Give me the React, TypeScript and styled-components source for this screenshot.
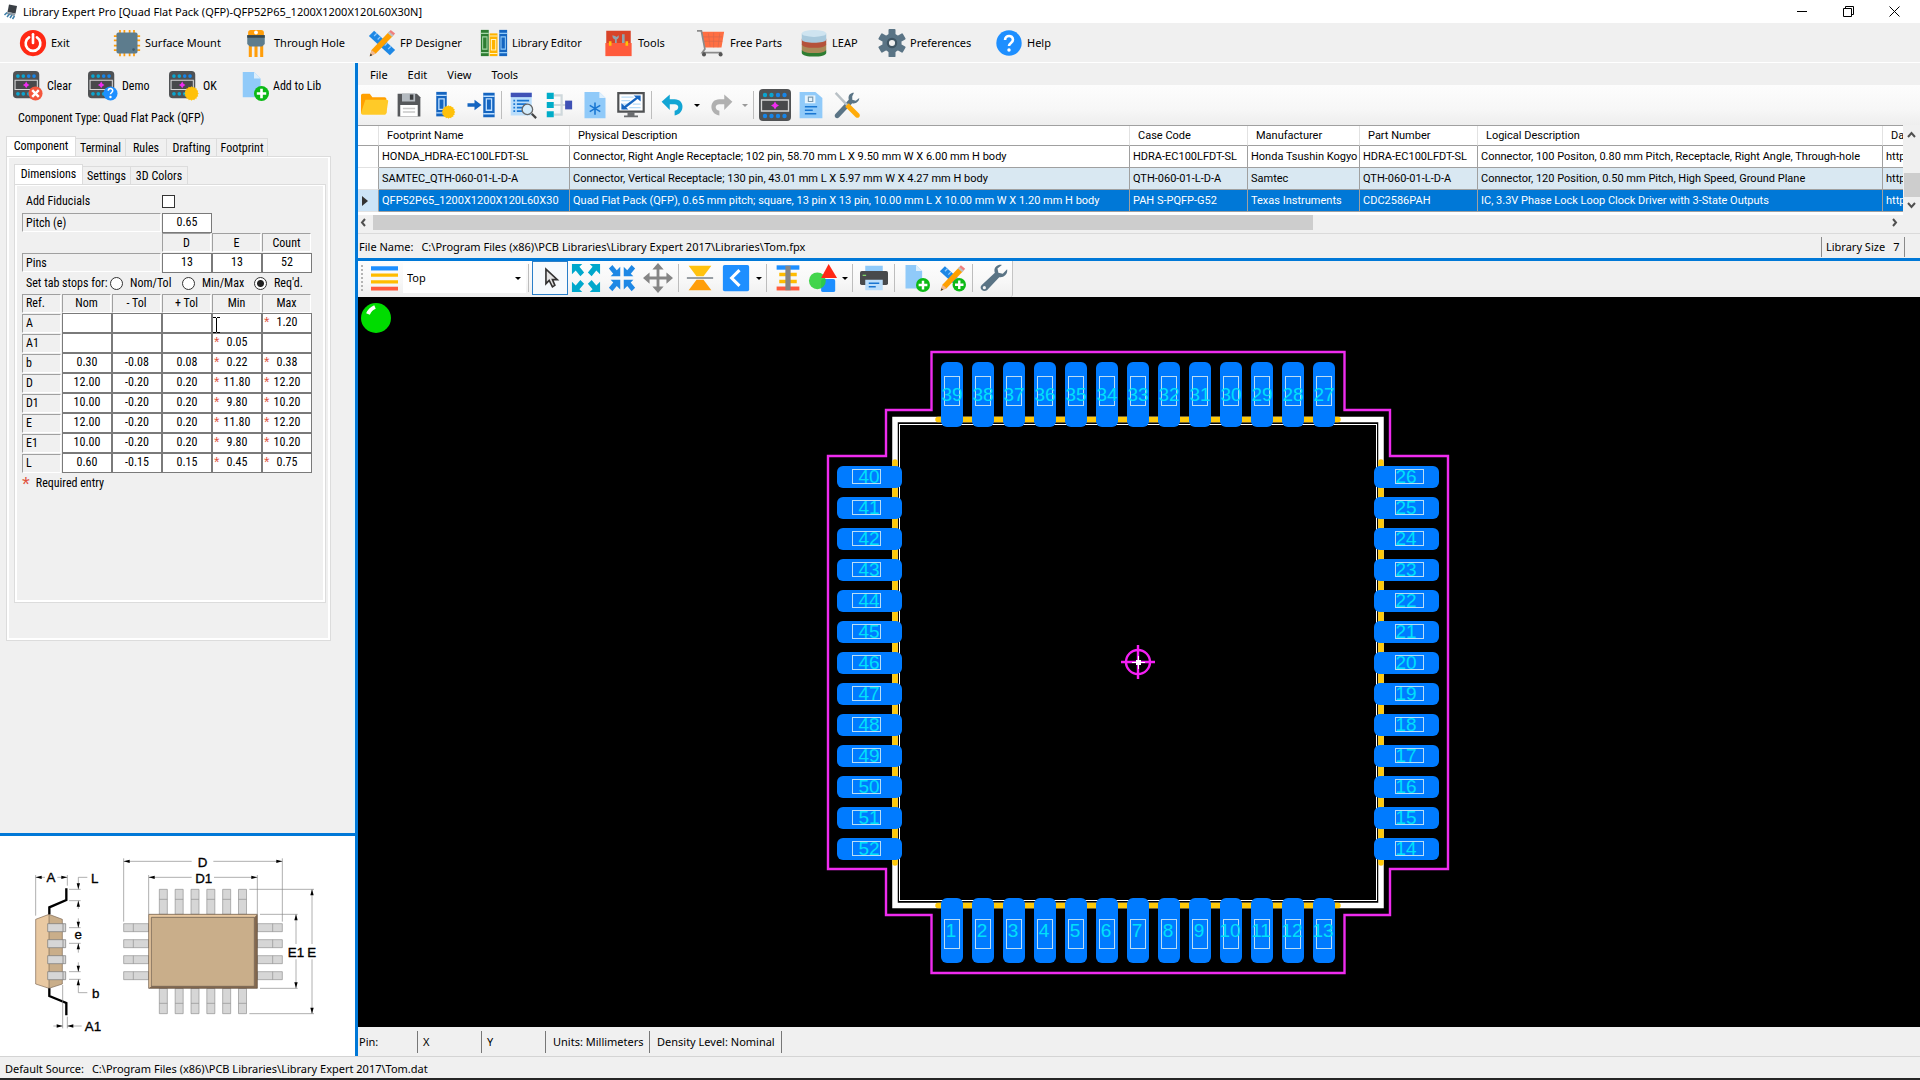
import React, { ReactNode, useState } from 'react';
import styled, { createGlobalStyle, css } from 'styled-components';

const ui = '"Noto Sans", "Open Sans", sans-serif';
const classic = '"Roboto Condensed", Roboto, "Liberation Sans", sans-serif';
const grid = 'Roboto, "Liberation Sans", sans-serif';
const accent = '#0078d7';
const face = '#f0f0f0';

const GlobalStyle = createGlobalStyle`
  *, *::before, *::after { box-sizing: border-box; }
  body { margin: 0; background: ${face}; color: #000; font: 11px/16px ${ui}; }
  button, input, select { font: inherit; color: inherit; margin: 0; }
  button { border: 0; padding: 0; background: none; }
  svg { display: block; flex: none; }
`;

/* ---------- frame ---------- */

const Window = styled.div`
  display: flex;
  flex-direction: column;
  height: 100vh;
  min-height: 700px;
  overflow: hidden;
`;
const TitleBar = styled.header`
  display: flex;
  align-items: center;
  flex: none;
  height: 23px;
  padding: 0 3px;
  background: #fff;
`;
const Title = styled.h1`
  flex: 1;
  margin: 0 0 0 4px;
  font-size: 11px;
  line-height: 16px;
  font-weight: 400;
`;
const WindowButton = styled.button`
  display: grid;
  place-items: center;
  width: 46px;
  height: 20px;
`;
const MainToolbar = styled.nav`
  display: flex;
  align-items: center;
  flex: none;
  height: 40px;
  padding-left: 19px;
  border-bottom: 1px solid #fff;
`;
const Command = styled.button<{ $w: number }>`
  display: flex;
  align-items: center;
  gap: 4px;
  width: ${p => p.$w}px;
  text-align: left;
  white-space: nowrap;
`;
const Body = styled.div`
  display: flex;
  flex: 1;
  min-height: 0;
`;
const AppStatus = styled.footer`
  display: flex;
  align-items: center;
  gap: 8px;
  flex: none;
  height: 24px;
  padding: 2px 5px 0;
  border-top: 1px solid #d4d4d4;
  border-bottom: 2px solid #262626;
`;

/* ---------- side panel ---------- */

const Side = styled.aside`
  display: flex;
  flex-direction: column;
  flex: none;
  width: 358px;
  border-right: 3px solid ${accent};
  box-shadow: inset -2px 0 #e2f5fc;
  font-family: ${classic};
  font-size: 12px;
`;
const SideToolbar = styled.div`
  display: flex;
  align-items: center;
  height: 46px;
  padding-left: 13px;
`;
const TypeLine = styled.p`
  margin: 0;
  padding: 1px 0 9px 18px;
  line-height: 17px;
`;
const TabGroup = styled.section`
  margin-right: 24px;
  margin-left: 6px;
`;
const InnerTabGroup = styled.section`
  margin: 7px 4px 0 6px;
`;
const TabStrip = styled.div`
  display: flex;
  align-items: flex-end;
`;
const Tab = styled.button<{ $w: number; $on?: boolean }>`
  width: ${p => p.$w}px;
  height: 18px;
  border: 1px solid #dcdcdc;
  border-bottom: 0;
  border-left-width: 0;
  ${p => p.$on && css`
    height: 20px;
    border-left-width: 1px;
    background: #fff;
    padding-bottom: 2px;
  `}
`;
const Pane = styled.div<{ $h: number }>`
  height: ${p => p.$h}px;
  border: 1px solid #dcdcdc;
  box-shadow: inset 2px 1px #fff, inset -2px -2px #fff;
  padding-left: 1px;
`;
const Form = styled.div`
  padding: 6px 0 0 6px;
`;
const Fiducials = styled.div`
  display: flex;
  align-items: center;
  height: 20px;
  margin-bottom: 2px;
  padding-left: 4px;
`;
const FiducialLabel = styled.label`
  width: 136px;
`;
const Check = styled.input`
  appearance: none;
  width: 13px;
  height: 13px;
  border: 1px solid #333;
  background: #fff;
`;
const PinGrid = styled.div`
  display: grid;
  grid-template-columns: 140px repeat(3, 50px);
  grid-auto-rows: 20px;
`;
const LabelCell = styled.label`
  margin: 0 1px 1px 0;
  padding-left: 3px;
  line-height: 18px;
  border: 1px solid #fff;
  border-top-color: #a0a0a0;
  border-left-color: #a0a0a0;
`;
const HeadCell = styled(LabelCell)`
  padding: 0;
  text-align: center;
`;
const Box = styled.input`
  display: block;
  width: 50px;
  height: 20px;
  padding: 0 0 2px;
  border: 1px solid #7a7a7a;
  background: #fff;
  text-align: center;
  line-height: 16px;
`;
const Stops = styled.fieldset`
  display: flex;
  align-items: center;
  height: 20px;
  margin: 0;
  padding: 0 0 0 4px;
  border: 0;
`;
const StopsTitle = styled.span`
  width: 84px;
`;
const RadioLabel = styled.label<{ $w: number }>`
  display: flex;
  align-items: center;
  gap: 7px;
  width: ${p => p.$w}px;
  white-space: nowrap;
`;
const Radio = styled.input`
  appearance: none;
  flex: none;
  width: 13px;
  height: 13px;
  border: 1px solid #333;
  border-radius: 50%;
  background: #fff;
  &:checked { background: radial-gradient(circle, #222 3px, #fff 4px); }
`;
const DimTable = styled.table`
  border-collapse: collapse;
  table-layout: fixed;
  width: 290px;
  td, th { padding: 0; height: 20px; font-weight: 400; }
`;
const DimHead = styled.div<{ $left?: boolean }>`
  height: 19px;
  margin-right: 1px;
  padding-left: ${p => (p.$left ? 3 : 0)}px;
  border: 1px solid #fff;
  border-top-color: #a0a0a0;
  border-left-color: #a0a0a0;
  text-align: ${p => (p.$left ? 'left' : 'center')};
  line-height: 17px;
`;
const DimCell = styled.div`
  position: relative;
`;
const Star = styled.span`
  position: absolute;
  top: 2px;
  left: 2px;
  color: #e0503c;
  font: 14px/14px "Liberation Sans", sans-serif;
`;
const Caret = styled.svg`
  position: absolute;
  top: 4px;
  left: 1px;
`;
const Note = styled.p`
  display: flex;
  align-items: center;
  gap: 6px;
  margin: 2px 0 0;
  line-height: 17px;
`;
const NoteStar = styled.span`
  color: #e0503c;
  font: 20px/12px "Liberation Sans", sans-serif;
`;
const Spacer = styled.div`
  flex: 1;
`;
const Preview = styled.figure`
  flex: none;
  margin: 0;
  border-top: 3px solid ${accent};
  background: #fff;
`;

/* ---------- library area ---------- */

const Work = styled.main`
  display: flex;
  flex-direction: column;
  flex: 1;
  min-width: 0;
`;
const MenuBar = styled.nav`
  display: flex;
  align-items: center;
  height: 22px;
  flex: none;
  padding: 0 2px;
`;
const MenuItem = styled.button`
  padding: 2px 10px 0;
  height: 20px;
`;
const ToolStrip = styled.div`
  display: flex;
  align-items: center;
  flex: none;
  height: 40px;
  background: linear-gradient(#fdfdfd, #f7f7f7 60%, #eeeeee);
`;
const Tool = styled.button<{ $w?: number; $on?: boolean }>`
  display: grid;
  place-items: center;
  flex: none;
  width: ${p => p.$w ?? 36}px;
  height: 34px;
  ${p => p.$on && css`
    border: 1px solid #2a7fc9;
    background: #f6fafd;
  `}
`;
const DropCaret = styled.button<{ $off?: boolean; $narrow?: boolean }>`
  display: grid;
  place-items: center;
  width: ${p => (p.$narrow ? 10 : 12)}px;
  height: 30px;
  &::after {
    content: '';
    border: 3px solid transparent;
    border-top-color: ${p => (p.$off ? '#9a9a9a' : '#000')};
    border-bottom: 0;
  }
`;
const Divider = styled.span`
  flex: none;
  width: 1px;
  height: 28px;
  margin: 0 3px 0 2px;
  background: #bdbdbd;
`;
const TableArea = styled.div`
  display: flex;
  flex: none;
  height: 90px;
`;
const TableClip = styled.div`
  flex: 1;
  min-width: 0;
  overflow: hidden;
  background: #fff;
`;
const PartTable = styled.table`
  table-layout: fixed;
  width: 1580px;
  border-collapse: separate;
  border-spacing: 0;
  border-top: 1px solid #a0a0a0;
  font: 11px/16px ${grid};
`;
const PartHead = styled.th`
  height: 20px;
  padding: 1px 0 0 8px;
  border-right: 1px solid #e2e2e2;
  border-bottom: 1px solid #a0a0a0;
  font-weight: 400;
  text-align: left;
  white-space: nowrap;
`;
const PartRow = styled.tr<{ $tone: 'plain' | 'alt' | 'on' }>`
  background: ${p => ({ plain: '#fff', alt: '#d9e8f2', on: accent })[p.$tone]};
  color: ${p => (p.$tone === 'on' ? '#fff' : '#000')};
`;
const PartCell = styled.td`
  height: 22px;
  padding: 1px 0 0 3px;
  border-right: 1px solid #a0a0a0;
  border-bottom: 1px solid #a0a0a0;
  white-space: nowrap;
`;
const Marker = styled(PartCell)<{ $on?: boolean }>`
  padding-left: 4px;
  background: ${p => (p.$on ? '#cce4f7' : '#fff')};
  border-bottom-color: #e2e2e2;
`;
const VScroll = styled.div`
  display: flex;
  flex-direction: column;
  align-items: center;
  width: 17px;
  padding: 4px 0;
`;
const VThumb = styled.div`
  width: 16px;
  height: 24px;
  margin: 33px 0 auto;
  background: #cdcdcd;
`;
const HScroll = styled.div`
  display: flex;
  align-items: center;
  flex: none;
  height: 15px;
  padding: 0 20px 0 0;
`;
const HTrack = styled.div`
  flex: 1;
  height: 15px;
  margin-left: 4px;
`;
const HThumb = styled.div`
  width: 62%;
  height: 15px;
  background: #cdcdcd;
`;
const FileLine = styled.div`
  display: flex;
  align-items: center;
  flex: none;
  height: 28px;
  margin-top: 3px;
  padding: 2px 0 0 1px;
  border-top: 1px solid #dadada;
  border-bottom: 3px solid ${accent};
`;
const FilePath = styled.span`
  flex: 1;
  margin-left: 8px;
`;
const LibrarySize = styled.span`
  display: flex;
  gap: 8px;
  height: 20px;
  align-items: center;
  width: 84px;
  margin-right: 15px;
  padding-left: 4px;
  border: solid #8a8a8a;
  border-width: 0 1px;
  white-space: nowrap;
`;

/* ---------- footprint view ---------- */

const ViewStrip = styled.div`
  display: flex;
  flex: none;
  height: 36px;
`;
const ViewTools = styled(ToolStrip)`
  height: 36px;
  padding-bottom: 2px;
  border-right: 1px solid #c4c4c4;
  border-radius: 0 0 3px 0;
`;
const Grip = styled.span`
  width: 2px;
  height: 26px;
  margin: 0 7px 0 3px;
  background: repeating-linear-gradient(#b4b4b4 0 2px, transparent 2px 4px);
`;
const LayerBox = styled.label`
  display: flex;
  align-items: center;
  gap: 4px;
`;
const LayerField = styled.span`
  display: flex;
  align-items: center;
  width: 123px;
  padding-right: 2px;
  background: #fff;
`;
const LayerSelect = styled.select`
  appearance: none;
  flex: 1;
  height: 26px;
  padding: 0 4px;
  border: 0;
  background: #fff;
`;
const Canvas = styled.div`
  position: relative;
  flex: 1;
  min-height: 0;
  background: #000;
`;
const Led = styled.svg`
  position: absolute;
  top: 5px;
  left: 2px;
`;
const ViewStatus = styled.div`
  display: flex;
  align-items: center;
  flex: none;
  height: 29px;
`;
const StatusCell = styled.span<{ $w: number; $pad?: number }>`
  width: ${p => p.$w}px;
  height: 22px;
  padding-left: ${p => p.$pad ?? 5}px;
  border-right: 1px solid #777;
  line-height: 22px;
  white-space: nowrap;
`;

/* ---------- icons ---------- */

const Icon = ({ w = 28, h = 28, children }: { w?: number; h?: number; children: ReactNode }) => (
  <svg width={w} height={h} viewBox="0 0 32 32" aria-hidden="true">{children}</svg>
);

const Power = () => (
  <Icon>
    <circle cx="16" cy="16" r="15" fill="#ff2814" />
    <path d="M11.5 9.500a8.400 8.400 0 1 0 9 0" fill="none" stroke="#fff" strokeWidth="3" strokeLinecap="round" />
    <path d="M16 6v10" stroke="#fff" strokeWidth="3" strokeLinecap="round" />
  </Icon>
);
const Smd = () => (
  <Icon>
    <path d="M8 1v30M13 1v30M19 1v30M24 1v30M1 8h30M1 13h30M1 19h30M1 24h30" stroke="#ff9d0a" strokeWidth="2" />
    <rect x="4" y="4" width="24" height="24" rx="2" fill="#5d7c8d" />
    <circle cx="23.500" cy="23.500" r="1.500" fill="#40596a" />
  </Icon>
);
const ThroughHole = () => (
  <Icon>
    <path d="M7 4q0-3 3-3h12q3 0 3 3v6H7z" fill="#ff9d0a" />
    <circle cx="16" cy="4" r="2.200" fill="#fff" />
    <path d="M9.500 18v14M16 18v14M22.500 18v14" stroke="#ff9d0a" strokeWidth="3.500" />
    <path d="M6 7h20v10l-3 3H9l-3-3z" fill="#5d7c8d" />
    <path d="M6 7h20v3H6z" fill="#37474f" />
  </Icon>
);
const RulerPencil = ({ plus }: { plus?: boolean }) => (
  <Icon w={plus ? 27 : 28}>
    <path d="M1 8 7 2l24 22-6 6z" fill="#1e88e5" />
    <path d="m10 5-3 3M14 9l-3 3M22 16l-3 3M26 20l-3 3" stroke="#8ec9ff" strokeWidth="1.500" />
    <path d="m2 31 2-7L24 3l5 4.500L9 28z" fill="#ffa000" />
    <path d="m2 31 2-7 5 4z" fill="#f0b890" />
    <path d="m2 31 1-3 2 2z" fill="#333" />
    <path d="m24 3 2-2 5 4-2 2.500z" fill="#ef7f7f" />
    <path d="m22.500 4.600 1.500-1.600 5 4.500-1.500 1.600z" fill="#b9c4ca" />
    {plus && <PlusBadge />}
  </Icon>
);
const Book = ({ x, c, d }: { x: number; c: string; d: string }) => (
  <g>
    <path d={`M${x} 1h9v30h-9z`} fill={c} />
    <path d={`M${x + 2} 9h5v14h-5zM${x} 5h9M${x} 27h9`} fill="none" stroke={d} strokeWidth="1.200" />
  </g>
);
const Books = () => (
  <Icon>
    <Book x={1} c="#2e7d32" d="#a5d6a7" />
    <path d="M11 5h9v26h-9z" fill="#ffb300" />
    <path d="M13 12h5v12h-5zM11 8h9M11 28h9" fill="none" stroke="#fff3c0" strokeWidth="1.200" />
    <Book x={22} c="#1565c0" d="#90caf9" />
  </Icon>
);
const Toolbox = () => (
  <Icon w={31} h={28}>
    <path d="M2 2h28v16H2z" fill="#d84328" />
    <path d="M9 7c0 3 1 4 3 5v5h2v-5c2-1 3-3 2-5l-2 2-2-1zM20 6h3v11h-3z" fill="#90a4ae" />
    <path d="M1 16h30v15H1z" fill="#ff5a3c" />
    <path d="M5 14h3v5H5zM24 14h3v5h-3z" fill="#ffc107" />
  </Icon>
);
const Cart = () => (
  <Icon w={30} h={28}>
    <path d="M5 3h26l-3 18H9z" fill="#ff6f43" />
    <path d="M13 5 15 20M19 4v17M26 5l-2 16M7 9h22M8 14h21" stroke="#d9694c" strokeWidth="0.800" />
    <path d="M0 2h5l4 21-3 4h22" fill="none" stroke="#8b8b8b" strokeWidth="2" />
    <circle cx="8" cy="29" r="2.300" fill="#555" />
    <circle cx="27" cy="29" r="2.300" fill="#555" />
  </Icon>
);
const Database = () => (
  <Icon>
    <path d="M2 24v3c0 6 28 6 28 0v-3z" fill="#2e7d32" />
    <path d="M2 17v6c0 6 28 6 28 0v-6z" fill="#a98a58" />
    <path d="M2 11v6c0 6 28 6 28 0v-6z" fill="#b5523a" />
    <path d="M2 5v7c0 5 28 5 28 0V5z" fill="#a9c9dc" />
    <ellipse cx="16" cy="5" rx="14" ry="4" fill="#cfe4f0" />
  </Icon>
);
const Gear = () => (
  <Icon>
    {[0, 60, 120].map(a => (
      <rect key={a} x="12" y="0" width="8" height="32" rx="1" fill="#5a7485" transform={`rotate(${a} 16 16)`} />
    ))}
    <circle cx="16" cy="16" r="11" fill="#5a7485" />
    <circle cx="16" cy="16" r="6" fill="#3f5563" />
    <circle cx="16" cy="16" r="3.500" fill="#f0f0f0" />
  </Icon>
);
const Question = () => (
  <path d="M11.500 12.500c0-6 9-6 9-.3 0 3.800-4.500 3.600-4.500 7.300" fill="none" stroke="#fff" strokeWidth="3" />
);
const Help = () => (
  <Icon>
    <circle cx="16" cy="16" r="14.500" fill="#1e8fff" />
    <Question />
    <circle cx="16" cy="24" r="2" fill="#fff" />
  </Icon>
);
const PlusBadge = () => (
  <g>
    <circle cx="24" cy="24" r="8" fill="#0cba16" />
    <path d="M24 19v10M19 24h10" stroke="#fff" strokeWidth="2.800" />
  </g>
);
const Burst = ({ x = 24, y = 24 }: { x?: number; y?: number }) => (
  <g fill="#ffc10a" transform={`translate(${x} ${y})`}>
    {[0, 22, 45, 67].map(a => <rect key={a} x="-5.500" y="-5.500" width="11" height="11" transform={`rotate(${a})`} />)}
  </g>
);
const Chip = ({ size = 30, badge, bottom = '#0aa5d0' }: { size?: number; badge?: 'x' | '?' | '*'; bottom?: string }) => (
  <Icon w={size} h={size}>
    <rect x="0" y="0" width={badge ? 28 : 32} height={badge ? 29 : 32} rx="4" fill="#505254" />
    <g transform={badge ? 'scale(.88 .9)' : undefined}>
      {[6, 12.500, 19, 25.500].map(x => (
        <g key={x}>
          <circle cx={x} cy="6" r="2.200" fill={x < 15 ? '#0aa5d0' : '#1685e8'} />
          <circle cx={x} cy="27" r="2.200" fill={bottom} />
        </g>
      ))}
      <path d="M2.500 11h27v11h-27z" fill="#48494b" stroke="#d5d5d5" strokeWidth="1.300" />
      <path d="m16 12.500 1.500 2.500 2.500 1.500-2.500 1.500-1.500 2.500-1.500-2.500-2.500-1.500 2.500-1.500z" fill="#f02cf0" />
    </g>
    {badge === 'x' && <g><circle cx="24" cy="24" r="7.500" fill="#f4563c" /><path d="m20.500 20.500 7 7m0-7-7 7" stroke="#fff" strokeWidth="2.600" /></g>}
    {badge === '?' && <g><circle cx="24" cy="24" r="7.500" fill="#1e8fff" /><g transform="translate(15.500 14.500) scale(.53)"><Question /><circle cx="16" cy="25" r="2.400" fill="#fff" /></g></g>}
    {badge === '*' && <Burst />}
  </Icon>
);
const PagePlus = ({ size = 30 }: { size?: number }) => (
  <Icon w={size} h={size}>
    <path d="M4 1h12l7 7v20H4z" fill="#90caf9" />
    <path d="M16 1v7h7z" fill="#dceefb" />
    <PlusBadge />
  </Icon>
);
const Folder = () => (
  <Icon>
    <path d="M0 5c0-1 1-2 2-2h8l3 4h14c1 0 2 1 2 2v16H0z" fill="#ffa000" />
    <path d="M5 10h24c1.500 0 2.500 1 2 2l-2 13c0 1-1 2-2 2H2c-1 0-2-1-2-2z" fill="#ffca28" />
  </Icon>
);
const Floppy = () => (
  <Icon>
    <path d="M3 3h22l4 4v22H3z" fill="#56585b" />
    <path d="M8 3h15v9H8z" fill="#b4bac0" />
    <path d="M17 4h4v6h-4z" fill="#3c3e40" />
    <path d="M6 16h20v13H6z" fill="#fff" />
    <path d="M9 20h14M9 24h14" stroke="#c8c8c8" strokeWidth="1.500" />
  </Icon>
);
const BookNew = () => (
  <Icon>
    <path d="M6 1h12v28H6z" fill="#1565c0" />
    <path d="M9 9h6v12H9zM6 5h12M6 25h12" fill="none" stroke="#bfe0ff" strokeWidth="1.500" />
    <Burst x={20} y={24} />
  </Icon>
);
const BookInto = () => (
  <Icon w={29} h={28}>
    <path d="M18 2h13v28H18z" fill="#1565c0" />
    <path d="M21.500 9h6v13h-6zM18 6h13M18 26h13" fill="none" stroke="#bfe0ff" strokeWidth="1.500" />
    <path d="M0 14h8v-4l8 6-8 6v-4H0z" fill="#1565c0" />
  </Icon>
);
const ListSearch = () => (
  <Icon>
    <path d="M2 2h24v26H2z" fill="#bbdefb" />
    <path d="M2 2h24v5H2z" fill="#3f51b5" />
    <path d="M5 11h2M9 11h14M5 15h2M9 15h11M5 19h2M9 19h7M5 23h2M9 23h7" stroke="#1976d2" strokeWidth="1.800" />
    <circle cx="21" cy="21" r="6" fill="#d4ecfb" stroke="#666" strokeWidth="1.500" />
    <path d="m26 26 5 5" stroke="#444" strokeWidth="2.500" />
  </Icon>
);
const Tree = () => (
  <Icon>
    <path d="M10 5h9v22h-9M10 16h14" fill="none" stroke="#cfd8dc" strokeWidth="2.500" />
    <path d="M2 2h8v7H2zM2 12.500h8v7H2zM2 23h8v7H2z" fill="#00acc8" />
    <path d="M23 11h8v10h-8z" fill="#3f51b5" />
  </Icon>
);
const PageStar = () => (
  <Icon>
    <path d="M4 1h17l7 7v23H4z" fill="#90caf9" />
    <path d="M21 1v7h7z" fill="#e1f1fd" />
    <path d="M16 13v14M10 16.500l12 7M22 16.500l-12 7" stroke="#1976d2" strokeWidth="1.800" />
  </Icon>
);
const Monitor = () => (
  <Icon w={32} h={28}>
    <path d="M1.500 2.500h29v21h-29z" fill="#fff" stroke="#505254" strokeWidth="2.500" />
    <path d="M5 7h14M5 11h10M5 15h8M14 19h13M18 15h9" stroke="#b8dcf7" strokeWidth="1.500" />
    <path d="m7 20 17-13" stroke="#1565c0" strokeWidth="2.800" />
    <path d="M19 5h8v7zM5 14v7h8z" fill="#1565c0" />
    <path d="M12 24h8v4h4v2H8v-2h4z" fill="#6b6d70" />
  </Icon>
);
const Undo = ({ color, flip }: { color: string; flip?: boolean }) => (
  <Icon w={26} h={26}>
    <g transform={flip ? 'translate(32 0) scale(-1 1)' : undefined}>
      <path d="M12 3v6h6c13 0 13 18 0 20v-6c6-1 6-8 0-8h-6v7L2 12z" fill={color} />
    </g>
  </Icon>
);
const PageSheet = () => (
  <Icon>
    <path d="M3 1h18l8 7v23H3z" fill="#90caf9" />
    <path d="M9 5h12v9H9z" fill="#e7f4fd" />
    <path d="M13 7h5v5h-5z" fill="none" stroke="#7a98ad" strokeWidth="1.300" />
    <path d="M9 18h14M9 22h9M9 26h13" stroke="#1976d2" strokeWidth="1.600" />
  </Icon>
);
const Wrench = ({ size = 28 }: { size?: number }) => (
  <Icon w={size} h={size}>
    <path d="M25 1c-6-1-10 4-8 9L2 24c-4 4 2 9 6 6l14-15c5 1 10-3 9-9l-5 5-5-1-1-5z" fill="#5a7485" />
    <circle cx="5" cy="27" r="1.800" fill="#f3f3f3" />
  </Icon>
);
const CrossTools = () => (
  <Icon>
    <path d="M24 2c-5 0-7 4-6 8L3 26c-3 3 1 7 4 4L22 14c4 1 8-2 8-6l-4 3-4-1v-4z" fill="#5a7485" />
    <path d="m2 3 2-2 14 15-2 2z" fill="#b9c1c6" />
    <path d="m14 18 4-4 12 12c2 3-1 6-4 4z" fill="#ffab0a" />
  </Icon>
);
const Layers = () => (
  <Icon w={29} h={27}>
    <path d="M0 4h32" stroke="#1e8fff" strokeWidth="5" />
    <path d="M0 12h32M0 20h32" stroke="#ffbc00" strokeWidth="4" />
    <path d="M0 28h32" stroke="#ff5a3c" strokeWidth="4.500" />
  </Icon>
);
const Pointer = () => (
  <Icon w={26} h={26}>
    <path d="M11 5v18l4-4 4 8 3-2-3-7h6z" fill="#e4e4e4" stroke="#333" strokeWidth="2" />
  </Icon>
);
const arrow = 'M0 0h11L8 3l5 6-4 4-5-6-4 4z';
const Expand = () => (
  <Icon w={30} h={30}>
    {[[1, 1, 1, 1], [31, 1, -1, 1], [1, 31, 1, -1], [31, 31, -1, -1]].map(([x, y, a, b]) => (
      <path key={`${x}-${y}`} d={arrow} fill="#00a8cc" transform={`translate(${x} ${y}) scale(${a} ${b})`} />
    ))}
  </Icon>
);
const Contract = () => (
  <Icon>
    {[[14, 14, -1, -1], [18, 14, 1, -1], [14, 18, -1, 1], [18, 18, 1, 1]].map(([x, y, a, b]) => (
      <path key={`${x}-${y}`} d={arrow} fill="#1e88e5" transform={`translate(${x} ${y}) scale(${a} ${b})`} />
    ))}
  </Icon>
);
const Move = () => (
  <Icon w={30} h={30}>
    <path d="M16 0l6 7h-4.500v7.500H25V10l7 6-7 6v-4.500h-7.500V25H22l-6 7-6-7h4.500v-7.500H7V22l-7-6 7-6v4.500h7.500V7H10z" fill="#858585" />
  </Icon>
);
const FlipV = () => (
  <Icon>
    <path d="M3 2h26l-9 12h-8z" fill="#ffc20e" />
    <path d="M3 30h26l-9-12h-8z" fill="#ff9d0a" />
    <path d="M1 16h30" stroke="#8a9298" strokeWidth="2" />
  </Icon>
);
const Back = () => (
  <Icon>
    <rect x="1" y="1" width="30" height="30" rx="2" fill="#1e8fff" />
    <path d="m20 7-9 9 9 9" fill="none" stroke="#fff" strokeWidth="3.500" />
  </Icon>
);
const Stack = () => (
  <Icon>
    <path d="M3 4h26" stroke="#1e8fff" strokeWidth="5" />
    <path d="M6 12h20M6 20h20" stroke="#ffbc00" strokeWidth="4" />
    <path d="M3 28h26" stroke="#ff5a3c" strokeWidth="4.500" />
    <path d="M16 2v28" stroke="#858585" strokeWidth="6" />
  </Icon>
);
const Shapes = () => (
  <Icon w={30} h={30}>
    <rect x="14" y="17" width="15" height="14" rx="2" fill="#1e8fff" />
    <circle cx="10" cy="19" r="9" fill="#2fd03a" fillOpacity=".9" />
    <path d="m22 1 9 15H14z" fill="#ff2814" />
  </Icon>
);
const Printer = () => (
  <Icon>
    <path d="M6 2h20v9H6z" fill="#90caf9" />
    <rect x="0" y="8" width="32" height="16" rx="2" fill="#484a4c" />
    <path d="M3 13h4" stroke="#7fd46b" strokeWidth="1.500" />
    <path d="M6 18h20v12H6z" fill="#bbdefb" />
    <path d="M10 22h12M10 26h8" stroke="#1976d2" strokeWidth="1.800" />
  </Icon>
);
const AppMark = () => (
  <Icon w={16} h={16}>
    <path d="m12 1 16 3-3 15-16-3z" fill="#3a3f45" />
    <path d="m9 16 16 3-2 5-17-4z" fill="#8f9aa3" />
    <path d="m3 22 5-5M8 26l5-6M14 28l4-6M19 30l4-6" stroke="#3d7ea8" strokeWidth="3" />
  </Icon>
);

/* ---------- drawings ---------- */

const span = (n: number) => Array.from({ length: n }, (_, i) => i);

type PadProps = { x: number; y: number; n: number; flat?: boolean; dx: number; dy: number; box: number };
const Pad = ({ x, y, n, flat, dx, dy, box }: PadProps) => (
  <g>
    <rect x={x} y={y} width={flat ? 65 : 22} height={flat ? 22 : 65} rx="6" fill="#007bff" />
    <rect
      x={(flat ? x + box : x + 3) + 0.5} y={(flat ? y + 3 : y + box) + 0.5}
      width={flat ? 28 : 15} height={flat ? 14 : 29} fill="none" stroke="#b9dcf5"
    />
    <text x={x + dx} y={y + dy} fill="#00e0fa" textAnchor="middle">{n}</text>
  </g>
);

const Footprint = () => (
  <svg width="100%" height="100%" viewBox="358 297 1562 730" role="img" aria-label="Quad flat pack footprint">
    <path
      d="M931.500 352H1344.500V410H1390V456H1448V869H1390V915H1344.500V973H931.500V915H886V869H828V456H886V410H931.500Z"
      fill="none" stroke="#ef2cef" strokeWidth="2.400"
    />
    <rect x="895" y="419.500" width="486" height="486" fill="none" stroke="#fff" strokeWidth="5.500" />
    <g stroke="#ffc90a" strokeWidth="5.500" strokeLinecap="round">
      <path d="M938 419.500H1338M938 905.500H1338M895 462V863M1381 462V863" />
    </g>
    <rect x="899.500" y="424.500" width="477" height="476" fill="none" stroke="#fff" />
    <g fontFamily="Liberation Sans, sans-serif" fontSize="19">
      {span(13).map(i => (
        <g key={i}>
          <Pad x={941 + 31 * i} y={362} n={39 - i} dx={11} dy={39} box={14} />
          <Pad x={941 + 31 * i} y={898} n={i + 1} dx={10} dy={39} box={21} />
          <Pad flat x={837} y={466 + 31 * i} n={40 + i} dx={32} dy={17} box={15} />
          <Pad flat x={1374} y={466 + 31 * i} n={26 - i} dx={32} dy={17} box={21} />
        </g>
      ))}
    </g>
    <g fill="none" stroke="#f51ff5" strokeWidth="2.400">
      <circle cx="1138" cy="662" r="12" />
      <path d="M1121 662h34M1138 645v34" />
    </g>
    <path d="M1132 662.500h13M1138.500 656v13" stroke="#fff" />
    <rect x="1136" y="660" width="5" height="5" fill="#fff" />
  </svg>
);

const tips = {
  l: 'l18 -5v10z', r: 'l-18 -5v10z', u: 'l-5 18h10z', d: 'l-5 -18h10z',
};
const Tip = ({ x, y, to }: { x: number; y: number; to: keyof typeof tips }) => (
  <path d={`M${x} ${y}${tips[to]}`} fill="#000" />
);
const PackageDrawing = () => (
  <svg width="355" height="220" viewBox="0 33 1065 660" role="img" aria-label="Package dimensions">
    <g fill="#d6d6d6" stroke="#8f8f8f" strokeWidth="2">
      {span(6).map(i => (
        <path key={i} d={`M${478 + 47.5 * i} 193h24v75h-24zm0 30h24M${478 + 47.5 * i} 490h24v76h-24zm0 45h24`} />
      ))}
      {span(4).map(i => (
        <path key={i} d={`M371 ${296 + 48 * i}h75v24h-75zm29 0v24M772 ${296 + 48 * i}h75v24h-75zm46 0v24`} />
      ))}
    </g>
    <path d="M446 268h326l-9 9H454v207l-8 6z" fill="#e9c9a2" />
    <path d="M772 268v222H446l8-6h309V277z" fill="#84694f" />
    <path d="M454 277h309v207H454z" fill="#c9ae8a" />
    <path d="M446 268h326v222H446zM454 277h309v207H454z" fill="none" stroke="#5c4a38" strokeWidth="2" />

    <path d="M107 283 147 268V490L107 477z" fill="#e9c9a2" />
    <path d="M147 268 187 283V477L147 490z" fill="#c9ae8a" />
    <path d="M107 283 147 268 187 283V477L147 490 107 477zM147 268V490" fill="none" stroke="#7b6753" strokeWidth="2" />
    {span(4).map(i => (
      <path key={i} d={`M143 ${296 + 48 * i}h54v24h-54zm46 0v24`} fill="#d6d6d6" stroke="#777" strokeWidth="2" />
    ))}
    <path d="M199 190V225L148 247V268M148 490V513L199 534V571" fill="none" stroke="#000" strokeWidth="7" />

    <g fill="none" stroke="#888" strokeWidth="2">
      <path d="M371 100V290M847 100V290M371 109H575M640 109H847M446 150V268M772 150V268M446 157H575M642 157H772" />
      <path d="M748 193H942M748 566H942M936 193V357M936 403V566M780 268H893M780 490H893M888 268V357M888 403V490" />
      <path d="M107 150V272M202 150V182M107 157H135M172 157H202M262 157H235V193M207 193H242M207 227H242M235 227V252" />
      <path d="M207 308H242M207 355H242M235 280V308M235 355V383M207 440H242M207 463H242M235 412V440M235 463V503H262" />
      <path d="M188 480V610M202 575V610M160 603H188M202 603H245" />
    </g>
    <Tip x={371} y={109} to="l" /><Tip x={847} y={109} to="r" />
    <Tip x={446} y={157} to="l" /><Tip x={772} y={157} to="r" />
    <Tip x={936} y={193} to="u" /><Tip x={936} y={566} to="d" />
    <Tip x={888} y={268} to="u" /><Tip x={888} y={490} to="d" />
    <Tip x={107} y={157} to="l" /><Tip x={202} y={157} to="r" />
    <Tip x={235} y={193} to="d" /><Tip x={235} y={227} to="u" />
    <Tip x={235} y={308} to="d" /><Tip x={235} y={355} to="u" />
    <Tip x={235} y={440} to="d" /><Tip x={235} y={463} to="u" />
    <Tip x={188} y={603} to="r" /><Tip x={202} y={603} to="l" />
    <g fontFamily="Liberation Sans, sans-serif" fontSize="40" textAnchor="middle" stroke="#000" strokeWidth="1">
      <text x="608" y="125">D</text>
      <text x="611" y="173">D1</text>
      <text x="888" y="395">E1</text>
      <text x="935" y="395">E</text>
      <text x="153" y="172">A</text>
      <text x="284" y="173">L</text>
      <text x="235" y="343">e</text>
      <text x="287" y="519">b</text>
      <text x="279" y="618">A1</text>
    </g>
  </svg>
);

const Chevron = ({ d }: { d: string }) => (
  <svg width="11" height="11" viewBox="0 0 11 11" aria-hidden="true">
    <path d={d} fill="none" stroke="#505050" strokeWidth="2" />
  </svg>
);

/* ---------- data ---------- */

const commands: [string, number, ReactNode][] = [
  ['Exit', 94, <Power />],
  ['Surface Mount', 129, <Smd />],
  ['Through Hole', 126, <ThroughHole />],
  ['FP Designer', 112, <RulerPencil />],
  ['Library Editor', 123, <Books />],
  ['Tools', 93, <Toolbox />],
  ['Free Parts', 104, <Cart />],
  ['LEAP', 78, <Database />],
  ['Preferences', 117, <Gear />],
  ['Help', 70, <Help />],
];

const parts: { tone: 'plain' | 'alt' | 'on'; cells: string[] }[] = [
  { tone: 'plain', cells: ['HONDA_HDRA-EC100LFDT-SL', 'Connector, Right Angle Receptacle; 102 pin, 58.70 mm L X 9.50 mm W X 6.00 mm H body', 'HDRA-EC100LFDT-SL', 'Honda Tsushin Kogyo', 'HDRA-EC100LFDT-SL', 'Connector, 100 Positon, 0.80 mm Pitch, Receptacle, Right Angle, Through-hole', 'http'] },
  { tone: 'alt', cells: ['SAMTEC_QTH-060-01-L-D-A', 'Connector, Vertical Receptacle; 130 pin, 43.01 mm L X 5.97 mm W X 4.27 mm H body', 'QTH-060-01-L-D-A', 'Samtec', 'QTH-060-01-L-D-A', 'Connector, 120 Position, 0.50 mm Pitch, High Speed, Ground Plane', 'http'] },
  { tone: 'on', cells: ['QFP52P65_1200X1200X120L60X30', 'Quad Flat Pack (QFP), 0.65 mm pitch; square, 13 pin X 13 pin, 10.00 mm L X 10.00 mm W X 1.20 mm H body', 'PAH S-PQFP-G52', 'Texas Instruments', 'CDC2586PAH', 'IC, 3.3V Phase Lock Loop Clock Driver with 3-State Outputs', 'http'] },
];
const columns = ['Footprint Name', 'Physical Description', 'Case Code', 'Manufacturer', 'Part Number', 'Logical Description', 'Da'];
const widths = [21, 191, 560, 118, 112, 118, 405, 55];

const dims: [string, string[]][] = [
  ['A', ['', '', '', '', '1.20*']],
  ['A1', ['', '', '', '0.05*', '']],
  ['b', ['0.30', '-0.08', '0.08', '0.22*', '0.38*']],
  ['D', ['12.00', '-0.20', '0.20', '11.80*', '12.20*']],
  ['D1', ['10.00', '-0.20', '0.20', '9.80*', '10.20*']],
  ['E', ['12.00', '-0.20', '0.20', '11.80*', '12.20*']],
  ['E1', ['10.00', '-0.20', '0.20', '9.80*', '10.20*']],
  ['L', ['0.60', '-0.15', '0.15', '0.45*', '0.75*']],
];
const dimHeads = ['Nom', '- Tol', '+ Tol', 'Min', 'Max'];

/* ---------- sections ---------- */

const Dimensions = () => {
  const [stop, setStop] = useState("Req'd.");
  return (
    <Form>
      <Fiducials>
        <FiducialLabel htmlFor="fid">Add Fiducials</FiducialLabel>
        <Check id="fid" type="checkbox" />
      </Fiducials>
      <PinGrid>
        <LabelCell htmlFor="pitch">Pitch (e)</LabelCell>
        <Box id="pitch" defaultValue="0.65" />
        <span /><span />
        <span />
        <HeadCell htmlFor="pinD">D</HeadCell>
        <HeadCell htmlFor="pinE">E</HeadCell>
        <HeadCell htmlFor="pinCount">Count</HeadCell>
        <LabelCell as="span">Pins</LabelCell>
        <Box id="pinD" defaultValue="13" />
        <Box id="pinE" defaultValue="13" />
        <Box id="pinCount" defaultValue="52" />
      </PinGrid>
      <Stops>
        <StopsTitle>Set tab stops for:</StopsTitle>
        {([['Nom/Tol', 72], ['Min/Max', 72], ["Req'd.", 60]] as [string, number][]).map(([name, w]) => (
          <RadioLabel key={name} $w={w}>
            <Radio type="radio" name="stops" checked={stop === name} onChange={() => setStop(name)} />
            {name}
          </RadioLabel>
        ))}
      </Stops>
      <DimTable>
        <colgroup>
          <col width="40" />
          {dimHeads.map(h => <col key={h} width="50" />)}
        </colgroup>
        <thead>
          <tr>
            <th><DimHead $left>Ref.</DimHead></th>
            {dimHeads.map(h => <th key={h}><DimHead>{h}</DimHead></th>)}
          </tr>
        </thead>
        <tbody>
          {dims.map(([ref, values]) => (
            <tr key={ref}>
              <th><DimHead $left>{ref}</DimHead></th>
              {values.map((v, i) => (
                <td key={i}>
                  <DimCell>
                    <Box aria-label={`${ref} ${dimHeads[i]}`} defaultValue={v.replace('*', '')} />
                    {v.endsWith('*') && <Star>*</Star>}
                    {ref === 'A' && i === 3 && (
                      <Caret width="7" height="16" viewBox="0 0 7 16" aria-hidden="true">
                        <path d="M0 .5h3M4 .5h3M3.500 1v14M0 15.500h3M4 15.500h3" stroke="#000" />
                      </Caret>
                    )}
                  </DimCell>
                </td>
              ))}
            </tr>
          ))}
        </tbody>
      </DimTable>
      <Note><NoteStar>*</NoteStar>Required entry</Note>
    </Form>
  );
};

const SidePanel = () => (
  <Side>
    <SideToolbar>
      <Command $w={75}><Chip badge="x" />Clear</Command>
      <Command $w={81}><Chip badge="?" />Demo</Command>
      <Command $w={70}><Chip badge="*" />OK</Command>
      <Command $w={90}><PagePlus />Add to Lib</Command>
    </SideToolbar>
    <TypeLine>Component Type: Quad Flat Pack (QFP)</TypeLine>
    <TabGroup>
      <TabStrip role="tablist">
        <Tab role="tab" aria-selected $on $w={70}>Component</Tab>
        <Tab role="tab" $w={50}>Terminal</Tab>
        <Tab role="tab" $w={41}>Rules</Tab>
        <Tab role="tab" $w={50}>Drafting</Tab>
        <Tab role="tab" $w={51}>Footprint</Tab>
      </TabStrip>
      <Pane $h={485}>
        <InnerTabGroup>
          <TabStrip role="tablist">
            <Tab role="tab" aria-selected $on $w={69}>Dimensions</Tab>
            <Tab role="tab" $w={48}>Settings</Tab>
            <Tab role="tab" $w={57}>3D Colors</Tab>
          </TabStrip>
          <Pane $h={419}><Dimensions /></Pane>
        </InnerTabGroup>
      </Pane>
    </TabGroup>
    <Spacer />
    <Preview><PackageDrawing /></Preview>
  </Side>
);

const PartList = () => (
  <>
    <TableArea>
      <TableClip>
        <PartTable>
          <colgroup>{widths.map((w, i) => <col key={i} width={w} />)}</colgroup>
          <thead>
            <tr>
              <PartHead aria-label="Current row" />
              {columns.map(c => <PartHead key={c}>{c}</PartHead>)}
            </tr>
          </thead>
          <tbody>
            {parts.map(p => (
              <PartRow key={p.cells[0]} $tone={p.tone}>
                <Marker $on={p.tone === 'on'}>
                  {p.tone === 'on' && <svg width="6" height="10" viewBox="0 0 6 10"><path d="M0 0 6 5 0 10z" fill="#333" /></svg>}
                </Marker>
                {p.cells.map((c, i) => <PartCell key={i}>{c}</PartCell>)}
              </PartRow>
            ))}
          </tbody>
        </PartTable>
      </TableClip>
      <VScroll>
        <Chevron d="m2 8 3.500-4L9 8" />
        <VThumb />
        <Chevron d="m2 3 3.500 4L9 3" />
      </VScroll>
    </TableArea>
    <HScroll>
      <Chevron d="M7 2 4 5.500 7 9" />
      <HTrack><HThumb /></HTrack>
      <Chevron d="m4 2 3 3.500L4 9" />
    </HScroll>
    <FileLine>
      File Name:
      <FilePath>C:\Program Files (x86)\PCB Libraries\Library Expert 2017\Libraries\Tom.fpx</FilePath>
      <LibrarySize><span>Library Size</span><span>7</span></LibrarySize>
    </FileLine>
  </>
);

export default function App() {
  return (
    <Window>
      <GlobalStyle />
      <TitleBar>
        <AppMark />
        <Title>Library Expert Pro [Quad Flat Pack (QFP)-QFP52P65_1200X1200X120L60X30N]</Title>
        <WindowButton aria-label="Minimize"><svg width="11" height="11"><path d="M0 5.500h10" stroke="#000" /></svg></WindowButton>
        <WindowButton aria-label="Restore"><svg width="11" height="11"><path d="M.5 2.500h8v8h-8zM2.500 2V.5h8v8H9" fill="none" stroke="#000" /></svg></WindowButton>
        <WindowButton aria-label="Close"><svg width="11" height="11"><path d="m.5.5 10 10m0-10-10 10" stroke="#000" /></svg></WindowButton>
      </TitleBar>
      <MainToolbar>
        {commands.map(([name, w, icon]) => <Command key={name} $w={w}>{icon}{name}</Command>)}
      </MainToolbar>
      <Body>
        <SidePanel />
        <Work>
          <MenuBar>
            {['File', 'Edit', 'View', 'Tools'].map(m => <MenuItem key={m}>{m}</MenuItem>)}
          </MenuBar>
          <ToolStrip>
            <Tool $w={33} aria-label="Open"><Folder /></Tool>
            <Tool aria-label="Save"><Floppy /></Tool>
            <Tool aria-label="New library"><BookNew /></Tool>
            <Tool aria-label="Import"><BookInto /></Tool>
            <Divider />
            <Tool aria-label="Find"><ListSearch /></Tool>
            <Tool aria-label="Tree"><Tree /></Tool>
            <Tool aria-label="Wildcard"><PageStar /></Tool>
            <Tool aria-label="Full screen"><Monitor /></Tool>
            <Divider />
            <Tool aria-label="Undo"><Undo color="#12a5d4" /></Tool>
            <DropCaret aria-label="Undo list" />
            <Tool aria-label="Redo"><Undo color="#b0b0b0" flip /></Tool>
            <DropCaret aria-label="Redo list" $off />
            <Divider />
            <Tool aria-label="Footprint"><Chip size={32} bottom="#1685e8" /></Tool>
            <Tool aria-label="Data sheet"><PageSheet /></Tool>
            <Tool aria-label="Options"><CrossTools /></Tool>
          </ToolStrip>
          <PartList />
          <ViewStrip>
            <ViewTools>
              <Grip />
              <LayerBox>
                <Layers />
                <LayerField>
                  <LayerSelect aria-label="Layer" defaultValue="Top"><option>Top</option><option>Bottom</option></LayerSelect>
                  <DropCaret as="span" />
                </LayerField>
              </LayerBox>
              <Divider />
              <Tool $on aria-label="Select"><Pointer /></Tool>
              <Tool aria-label="Zoom to fit"><Expand /></Tool>
              <Tool aria-label="Zoom in"><Contract /></Tool>
              <Tool aria-label="Pan"><Move /></Tool>
              <Divider />
              <Tool aria-label="Flip"><FlipV /></Tool>
              <Tool aria-label="Rotate"><Back /></Tool>
              <DropCaret $narrow aria-label="Rotate list" />
              <Divider />
              <Tool aria-label="Layer stack"><Stack /></Tool>
              <Tool $w={34} aria-label="Shapes"><Shapes /></Tool>
              <DropCaret $narrow aria-label="Shape list" />
              <Divider />
              <Tool aria-label="Print"><Printer /></Tool>
              <Divider />
              <Tool aria-label="Add page"><PagePlus size={28} /></Tool>
              <Tool aria-label="Add design"><RulerPencil plus /></Tool>
              <Divider />
              <Tool aria-label="Settings"><Wrench /></Tool>
            </ViewTools>
          </ViewStrip>
          <Canvas>
            <Footprint />
            <Led width="32" height="32" viewBox="0 0 32 32" aria-label="Ready">
              <circle cx="16" cy="16" r="15" fill="#00dc00" />
              <path d="M8 12q2-5 7-7" fill="none" stroke="#fff" strokeWidth="4" />
            </Led>
          </Canvas>
          <ViewStatus>
            <StatusCell $w={60} $pad={1}>Pin:</StatusCell>
            <StatusCell $w={64}>X</StatusCell>
            <StatusCell $w={64}>Y</StatusCell>
            <StatusCell $w={104} $pad={7}>Units: Millimeters</StatusCell>
            <StatusCell $w={132} $pad={7}>Density Level: Nominal</StatusCell>
          </ViewStatus>
        </Work>
      </Body>
      <AppStatus>
        <span>Default Source:</span>
        <span>C:\Program Files (x86)\PCB Libraries\Library Expert 2017\Tom.dat</span>
      </AppStatus>
    </Window>
  );
}
